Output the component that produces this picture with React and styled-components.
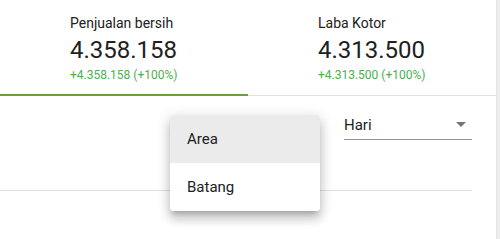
import React from "react";
import styled, { createGlobalStyle } from "styled-components";

const Global = createGlobalStyle`
  html, body { margin: 0; padding: 0; background: #fff; }
  body { font-family: Roboto, "Noto Sans", Arial, sans-serif; color: rgba(0,0,0,0.87); }
`;

const Page = styled.div`
  display: flex;
  width: 500px;
  height: 239px;
  overflow: hidden;
  position: relative;
`;

const Main = styled.div`
  width: 496px;
  display: flex;
  flex-direction: column;
`;

const Scrollbar = styled.div`
  width: 4px;
  background: #eeeeee;
  border-left: 1px solid #e6e6e6;
  box-sizing: border-box;
`;

const Tabs = styled.div`
  display: flex;
  border-bottom: 1px solid #e0e0e0;
`;

const Tab = styled.div`
  width: 248px;
  box-sizing: border-box;
  padding: 13px 0 0 70px;
  height: 96px;
  margin-bottom: -1px;
  border-bottom: 2px solid ${(p) => (p.$active ? "#689f38" : "transparent")};
  display: flex;
  flex-direction: column;
`;

const TabTitle = styled.div`
  font-size: 14px;
  line-height: 20px;
  color: #212121;
`;

const TabValue = styled.div`
  font-size: 24px;
  line-height: 32px;
  margin-top: 1px;
  color: #212121;
`;

const TabChange = styled.div`
  font-size: 12px;
  line-height: 16px;
  margin-top: 1px;
  color: #4caf50;
`;

const Content = styled.div`
  padding-right: 24px;
  display: flex;
  flex-direction: column;
`;

const Toolbar = styled.div`
  height: 95px;
  display: flex;
  justify-content: flex-end;
  align-items: flex-start;
  padding-top: 17px;
  box-sizing: border-box;
  border-bottom: 1px solid #e0e0e0;
`;

const Select = styled.div`
  width: 128px;
  height: 27px;
  box-sizing: border-box;
  border-bottom: 1px solid rgba(0,0,0,0.42);
  display: flex;
  align-items: center;
  justify-content: space-between;
  padding-bottom: 3px;
  font-size: 15px;
  color: #212121;
`;

const Arrow = styled.span`
  width: 0;
  height: 0;
  margin-right: 6px;
  border-left: 5px solid transparent;
  border-right: 5px solid transparent;
  border-top: 5px solid rgba(0,0,0,0.54);
`;

const Menu = styled.div`
  position: absolute;
  left: 170px;
  top: 115px;
  width: 150px;
  background: #fff;
  border-radius: 4px;
  overflow: hidden;
  box-shadow: 0px 5px 5px -3px rgba(0,0,0,0.2), 0px 8px 10px 1px rgba(0,0,0,0.14), 0px 3px 14px 2px rgba(0,0,0,0.12);
`;

const MenuItem = styled.div`
  height: 48px;
  display: flex;
  align-items: center;
  padding-left: 17px;
  font-size: 15px;
  color: #212121;
  background: ${(p) => (p.$selected ? "#ebebeb" : "#fff")};
`;

export default function App() {
  return (
    <>
      <Global />
      <Page>
        <Main>
          <Tabs>
            <Tab $active>
              <TabTitle>Penjualan bersih</TabTitle>
              <TabValue>4.358.158</TabValue>
              <TabChange>+4.358.158 (+100%)</TabChange>
            </Tab>
            <Tab>
              <TabTitle>Laba Kotor</TabTitle>
              <TabValue>4.313.500</TabValue>
              <TabChange>+4.313.500 (+100%)</TabChange>
            </Tab>
          </Tabs>
          <Content>
            <Toolbar>
              <Select>
                <span>Hari</span>
                <Arrow />
              </Select>
            </Toolbar>
          </Content>
        </Main>
        <Scrollbar />
        <Menu>
          <MenuItem $selected>Area</MenuItem>
          <MenuItem>Batang</MenuItem>
        </Menu>
      </Page>
    </>
  );
}
